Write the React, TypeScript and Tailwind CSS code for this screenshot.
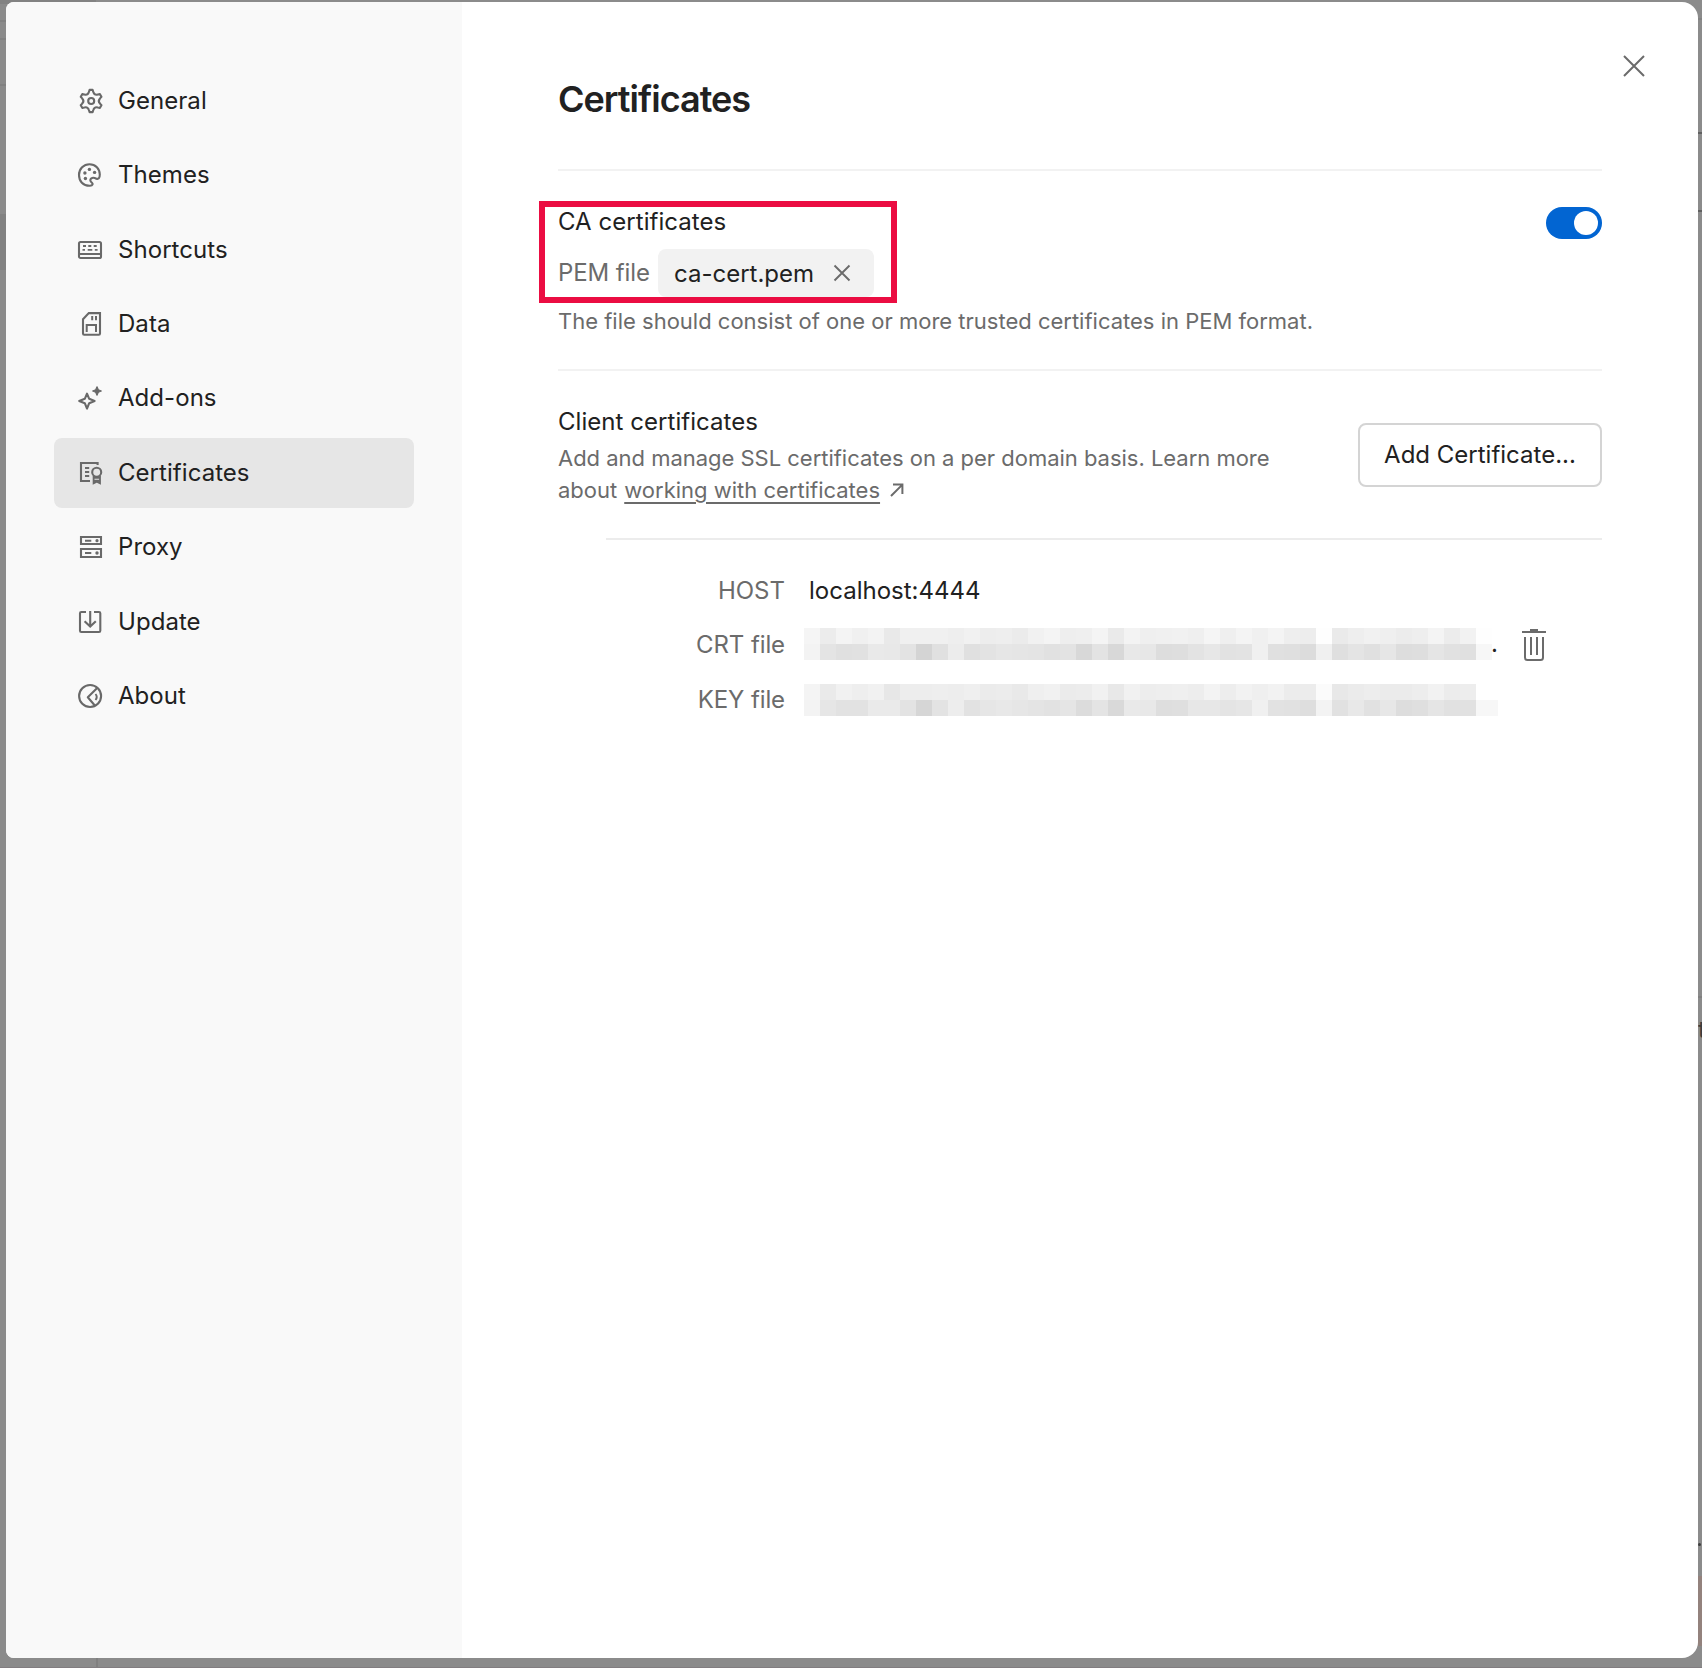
import React from 'react';

type IconProps = { children: React.ReactNode };

function Icon({ children }: IconProps) {
  return (
    <svg
      viewBox="0 0 32 32"
      className="size-8 shrink-0 text-[#696969]"
      fill="none"
      stroke="currentColor"
      strokeWidth="2.1"
      strokeLinejoin="round"
    >
      {children}
    </svg>
  );
}

// Six-toothed gear outline around (17, 16).
function gearPath() {
  const rot = (x: number, y: number, k: number) => {
    const a = (k * Math.PI) / 3;
    return `${(17.1 + x * Math.cos(a) - y * Math.sin(a)).toFixed(2)} ${(16 + x * Math.sin(a) + y * Math.cos(a)).toFixed(2)}`;
  };
  let d = `M${rot(-2.2, -9, 0)}`;
  for (let k = 0; k < 6; k++) {
    d += `L${rot(-1.5, -11.1, k)}L${rot(1.5, -11.1, k)}L${rot(2.2, -9, k)}`;
    d += `Q${rot(3.25, -5.6, k)} ${rot(-2.2, -9, k + 1)}`;
  }
  return d + 'Z';
}

const GeneralIcon = () => (
  <Icon>
    <path d={gearPath()} />
    <circle cx="17.2" cy="16" r="3" />
  </Icon>
);

const ThemesIcon = () => (
  <Icon>
    <path d="M16 26.8C9 27 5 22 5 16C5 10 9.7 5.2 15.5 5.2C21.5 5.2 25.8 9.8 25.8 15.5C25.8 19.6 24.4 20.2 22.4 19.7C19.4 18.2 16.3 18.6 16.3 21.3C16.4 23.4 19.2 23.8 18.6 25.4C18.2 26.4 17 26.8 16 26.8Z" />
    <g fill="currentColor" stroke="none">
      <circle cx="15.4" cy="10.4" r="1.7" />
      <circle cx="10.9" cy="14" r="1.7" />
      <circle cx="20.6" cy="13.4" r="1.7" />
      <circle cx="11.4" cy="19.5" r="1.7" />
    </g>
  </Icon>
);

const ShortcutsIcon = () => (
  <Icon>
    <rect x="5" y="8" width="22" height="16" rx="1.6" />
    <path d="M5 20H27" strokeWidth="2" />
    <path d="M9 12H12M14.3 12H17.3M19.7 12H22.7M8.5 15.9H11M13.7 15.9H18.3M20.8 15.9H23.6" strokeWidth="1.9" />
  </Icon>
);

const DataIcon = () => (
  <Icon>
    <path d="M9 11.2L14.8 5.1H26V25.6Q26 26.8 24.8 26.8H10.2Q9 26.8 9 25.6Z" strokeLinejoin="miter" />
    <path d="M12.7 24V17H22V24M18.2 8V12.2M22 8V12.2" strokeWidth="2" strokeLinejoin="miter" />
  </Icon>
);

const AddonsIcon = () => (
  <Icon>
    <path d="M13 11.6L15.2 16.8L20.6 19L15.2 21.2L13 26.6L10.8 21.2L5.2 19L10.8 16.8Z" />
    <path d="M23 4.8L24.3 7.7L27.3 9L24.3 10.3L23 13.2L21.7 10.3L18.7 9L21.7 7.7Z" fill="currentColor" strokeWidth="1.2" />
  </Icon>
);

const CertificatesIcon = () => (
  <Icon>
    <path d="M23.6 8V6H7V24H16" strokeLinejoin="miter" />
    <path d="M11 11H15.2M11 15H15.2M11 19H15.2" strokeWidth="2" />
    <circle cx="22.7" cy="15.2" r="4.5" />
    <path d="M19.6 19V26.2L22.8 24.6L26 26.2V19M19.6 20.8H26M19.6 23.6H26" strokeLinejoin="miter" strokeWidth="1.8" />
  </Icon>
);

const ProxyIcon = () => (
  <Icon>
    <path d="M7 6H27V13H7ZM7 18H27V26H7Z" strokeLinejoin="miter" />
    <path d="M11 9.7H17.3M11 22H17.3" strokeWidth="1.9" />
    <g fill="currentColor" stroke="none">
      <circle cx="23" cy="9.7" r="1.6" />
      <circle cx="23" cy="22" r="1.7" />
    </g>
  </Icon>
);

const UpdateIcon = () => (
  <Icon>
    <path d="M12 6H7.3Q6 6 6 7.3V24.7Q6 26 7.3 26H25Q26.3 26 26.3 24.7V7.3Q26.3 6 25 6H20" />
    <path d="M16.2 5V20.6M10.6 15.2L16.2 20.6L21.8 15.2" strokeLinejoin="miter" />
  </Icon>
);

const AboutIcon = () => (
  <Icon>
    <circle cx="16.1" cy="16" r="11" />
    <path d="M23.2 8L13.8 17.3L20.6 25.2" />
    <path d="M21.5 14C23 15.8 23 18.2 21.5 20" strokeWidth="1.9" />
  </Icon>
);

const navItems = [
  { label: 'General', icon: GeneralIcon },
  { label: 'Themes', icon: ThemesIcon },
  { label: 'Shortcuts', icon: ShortcutsIcon },
  { label: 'Data', icon: DataIcon },
  { label: 'Add-ons', icon: AddonsIcon },
  { label: 'Certificates', icon: CertificatesIcon, active: true },
  { label: 'Proxy', icon: ProxyIcon },
  { label: 'Update', icon: UpdateIcon },
  { label: 'About', icon: AboutIcon },
];

function Sidebar() {
  return (
    <nav className="w-[456px] shrink-0 bg-[#f9f9f9] px-12 pt-[63.8px]">
      <ul className="flex w-[360px] flex-col gap-[4.4px]">
        {navItems.map(({ label, icon: ItemIcon, active }) => (
          <li
            key={label}
            className={`flex h-[70px] items-center gap-3 rounded-lg pl-5 tracking-[0.05px] ${active ? 'bg-[#e6e6e6]' : ''}`}
          >
            <ItemIcon />
            <span className="leading-8">{label}</span>
          </li>
        ))}
      </ul>
    </nav>
  );
}

// Grey levels of the redaction mosaic, one hex byte per 16px cell.
const crtTop =
  'f5 ec f4 f0 f3 e9 f0 f0 f0 ee f1 ed ee eb f1 f4 ee ef f4 ea f3 ef f0 f1 ef f5 ef f4 f0 f4 ee ed fe ea ee f1 ef ec ee f4 ec f2 fe';
const crtBottom =
  'f3 e4 e0 e1 e9 e8 e3 d4 e0 ec e0 e3 e6 e5 e4 e1 e3 d8 e3 d8 e8 e7 dd de e3 e7 e2 e3 f0 e0 df dc f0 df e4 e0 e6 dd de e5 e1 e0 f7';
const keyTop =
  'f4 ea f1 ee f1 e7 ed ed ee ed ef eb ec e9 ef f1 eb ec f1 e8 f1 ed ee ef ed f3 ed f2 ef f2 ec ec fb e8 eb ed eb eb ed f2 ec ed ff';
const keyBottom =
  'f3 e6 e2 e2 ea ea e3 d6 e3 ed e2 e6 e8 e6 e4 e2 e5 dc e4 d9 e9 e8 de df e7 e7 e4 e6 f0 e2 e1 de f3 e1 e8 e1 e7 dd df e5 e1 e1 f7';

function Redacted({ rows }: { rows: string[] }) {
  return (
    <div className="flex flex-col">
      {rows.map((row, r) => (
        <div key={r} className="flex">
          {row.split(' ').map((v, i) => (
            <span key={i} className="size-4" style={{ backgroundColor: `#${v}${v}${v}` }} />
          ))}
        </div>
      ))}
    </div>
  );
}

function Backdrop() {
  return (
    <div className="absolute inset-0 overflow-hidden bg-[#8b8b8b] text-[#3c3c3c]">
      <div className="absolute left-0 top-0 h-1 w-[96px] bg-[#828282]" />
      <div className="absolute left-0 top-5 h-0.5 w-2 bg-[#828282]" />
      <div className="absolute left-0 top-[38px] h-0.5 w-2 bg-[#828282]" />
      <div className="absolute left-0 top-[84px] h-0.5 w-2 bg-[#828282]" />
      <div className="absolute left-0 top-[214px] h-14 w-2 bg-[#828282]" />
      <div className="absolute right-0 top-[18px] h-0.5 w-2 bg-[#828282]" />
      <div className="absolute right-0 top-[132px] h-0.5 w-2 bg-[#606060]" />
      <div className="absolute right-0 top-[210px] h-0.5 w-2 bg-[#606060]" />
      <div className="absolute right-0 top-[996px] h-0.5 w-2 bg-[#808080]" />
      <span className="absolute left-[1698px] top-[1014px] leading-8">t</span>
      <div className="absolute left-[1698px] top-[1543px] size-[3px] rounded-full bg-[#3c3c3c]" />
      <div className="absolute left-[1698px] top-[1576px] h-[70px] w-1 bg-[#93827d]" />
      <div className="absolute bottom-0 left-[96px] h-2.5 w-0.5 bg-[#808080]" />
      <div className="absolute bottom-0 left-0 h-px w-full bg-[#817d80]" />
    </div>
  );
}

function Cross({ className }: { className: string }) {
  return (
    <svg viewBox="0 0 24 24" className={className} fill="none" stroke="currentColor">
      <path d="M2 2L22 22M22 2L2 22" />
    </svg>
  );
}

export default function App() {
  return (
    <div className="relative h-[1668px] w-[1702px] overflow-hidden font-['Inter',sans-serif] text-2xl text-[#212121]">
      <Backdrop />
      <div className="relative ml-1.5 mt-0.5 flex h-[1656px] w-[1692px] overflow-hidden rounded-l-lg rounded-r-2xl bg-white">
        <Sidebar />
        <main className="relative flex-1 px-24 pt-[77px]">
          <button className="absolute right-[52px] top-[52px] flex size-6 items-center justify-center text-[#6b6b6b]" aria-label="Close">
            <Cross className="size-6 stroke-[2]" />
          </button>

          <h1 className="text-4xl font-semibold leading-10 tracking-[-0.98px]">Certificates</h1>

          <section className="mt-[50px] flex h-[200px] justify-between border-t-2 border-[#f2f2f2] pt-[34px]">
            <div className="relative">
              <div className="absolute -left-[19px] -top-1 h-[102px] w-[358px] border-[6px] border-[#eb0d42]" />
              <h2 className="pt-px leading-8 tracking-[0.05px]">CA certificates</h2>
              <div className="mt-[11px] flex h-12 items-center text-[#6b6b6b]">
                <span className="w-[100px] leading-8 tracking-[-0.1px]">PEM file</span>
                <span className="flex h-12 w-[216px] items-center rounded-lg bg-[#f2f2f2] pl-4">
                  <span className="pt-0.5 leading-8 text-[#212121]">ca-cert.pem</span>
                  <Cross className="ml-[19px] size-[18px] stroke-[2.5]" />
                </span>
              </div>
              <p className="mt-2 text-[22px] leading-8 text-[#6b6b6b]">
                The file should consist of one or more trusted certificates in PEM format.
              </p>
            </div>
            <div className="mt-0.5 flex h-8 w-14 items-center justify-end rounded-full bg-[#0265d2] px-1">
              <div className="size-6 rounded-full bg-white" />
            </div>
          </section>

          <section className="flex h-[169px] justify-between border-t-2 border-[#f2f2f2] pt-[34px]">
            <div>
              <h2 className="pt-px leading-8 tracking-[0.05px]">Client certificates</h2>
              <div className="mt-1 w-[730px] text-[22px] leading-8 text-[#6b6b6b]">
                <p className="tracking-[-0.02px]">Add and manage SSL certificates on a per domain basis. Learn more</p>
                <p className="flex items-center">
                  <span className="mr-[7px]">about</span>
                  <a className="underline decoration-2 underline-offset-[4px]">working with certificates</a>
                  <svg viewBox="0 0 14 14" className="ml-2.5 size-3.5" fill="none" stroke="currentColor" strokeWidth="2">
                    <path d="M1 13L12.4 1.6M3 1.6H12.4V11" />
                  </svg>
                </p>
              </div>
            </div>
            <button className="mt-[18px] h-16 w-[244px] rounded-lg border-2 border-[#d4d4d4] leading-8">Add Certificate...</button>
          </section>

          <section className="ml-12 flex h-[200px] border-t-2 border-[#ececec] pt-[22px]">
            <dl className="grid grid-cols-[179px_1fr] grid-rows-[54px_56px_56px] items-center gap-x-[19px]">
              <dt className="pt-[3px] text-right leading-8 text-[#6b6b6b]">HOST</dt>
              <dd className="pl-[5px] pt-[3px] leading-8">localhost:4444</dd>
              <dt className="pt-0.5 text-right leading-8 tracking-[-0.1px] text-[#6b6b6b]">CRT file</dt>
              <dd className="flex items-center">
                <Redacted rows={[crtTop, crtBottom]} />
                <span className="-ml-px w-0 whitespace-nowrap leading-8">.</span>
              </dd>
              <dt className="text-right leading-8 tracking-[-0.1px] text-[#6b6b6b]">KEY file</dt>
              <dd className="flex items-end">
                <Redacted rows={[keyTop, keyBottom]} />
                <span className="h-4 w-1.5 bg-[#f7f7f7]" />
              </dd>
            </dl>
            <button className="ml-6 mt-[67px] size-8 text-[#6b6b6b]" aria-label="Delete certificate">
              <svg viewBox="0 0 24 32" className="h-8 w-6" fill="none" stroke="currentColor" strokeWidth="2">
                <path d="M0 3H24M8 1H16" />
                <path d="M3 8V28.5Q3 31 5.500 31H18.500Q21 31 21 28.500V8M9 8V26M15 8V26" />
              </svg>
            </button>
          </section>
        </main>
      </div>
    </div>
  );
}
